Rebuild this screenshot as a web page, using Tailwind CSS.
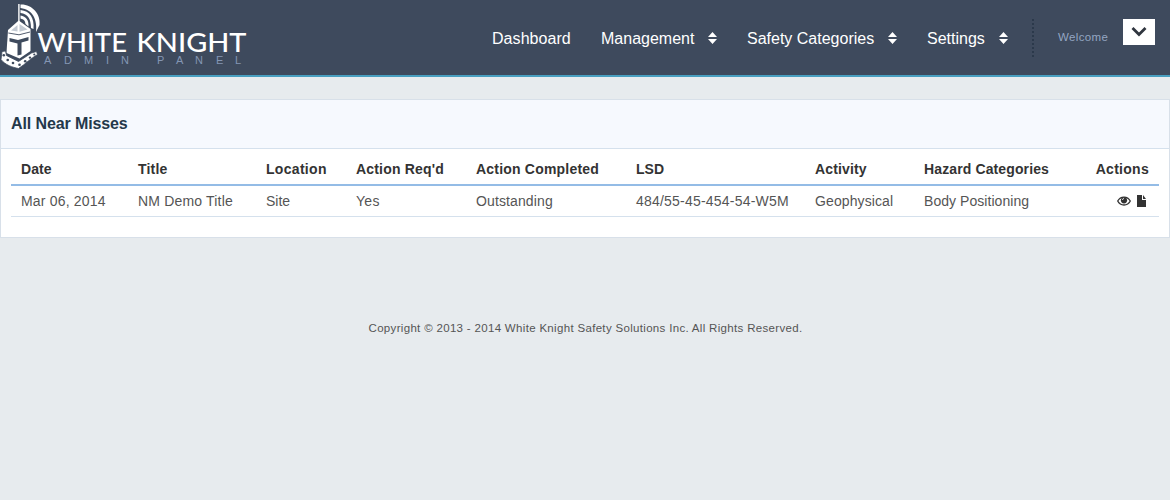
<!DOCTYPE html>
<html lang="en">
<head>
<meta charset="utf-8">
<title>White Knight Admin Panel</title>
<script src="https://cdn.jsdelivr.net/npm/@tailwindcss/browser@4"></script>
</head>
<body class="min-h-screen bg-[#e7ebee] font-['Liberation_Sans',Arial,sans-serif] text-[#555] overflow-hidden">
<header class="flex h-[77px] items-start border-b-2 border-[#489fc0] bg-[#3e4a5d]">
  <svg class="block h-[75px] w-[260px] shrink-0" viewBox="0 0 260 75">
    <path d="M18.900 4V23" stroke="#fff" stroke-width="1.400"/>
    <path d="M20.500 4.500C32 4 41 14 39.500 25L36 32C37.500 20 33 9.500 20.500 8Z" fill="#fff"/>
    <path d="M20.500 10C30 11 34.500 18 33.500 29L31 28C31 19 28 14 20.500 13Z" fill="#fff"/>
    <path d="M20.500 15.500C26 16.500 29 20 28.500 26.500L25.500 24C25 20.500 24 19.500 20.500 18.500Z" fill="#fff"/>
    <path d="M18.700 20.500L30.500 29V51L19.500 58.500L6.500 53L8 30Z" fill="#fff"/>
    <path d="M19.500 24L27.500 29.500L19.500 31.800ZM17.500 25V31.500L11 30.500Z" fill="#c3cad3"/>
    <path d="M8.300 33L19 34.800L30 32" fill="none" stroke="#3e4a5d" stroke-width=".9"/>
    <path d="M9.500 38L18 40L28.500 37V40.500L21.500 42.500V54.500L17.500 55.500V43.500L9.500 41.500Z" fill="#3e4a5d"/>
    <path d="M2 51.500L5.500 51L6.500 55.500L18.500 61.500L31.500 53L36.500 51.500L37.500 54.500C30.500 58.500 25.500 64 18.500 68.500C13 67.500 5 65 1 59.500Z" fill="#fff" stroke="#3e4a5d" stroke-width=".8"/>
    <g fill="#3e4a5d"><circle cx="3.800" cy="55.300" r="1.300"/><circle cx="7.700" cy="60" r="1.300"/><circle cx="13" cy="63" r="1.300"/><circle cx="19.500" cy="64.700" r="1.300"/><circle cx="25.200" cy="61.200" r="1.300"/><circle cx="30" cy="57.600" r="1.200"/><circle cx="34.300" cy="54.500" r="1.100"/></g>
    <g class="fill-white font-['Lato',sans-serif] text-[26.400px] font-medium">
      <text x="37.500" y="52" textLength="89.500" lengthAdjust="spacingAndGlyphs">WHITE</text>
      <text x="136.500" y="52" textLength="110" lengthAdjust="spacingAndGlyphs">KNIGHT</text>
    </g>
    <text x="44 64 84 106 121 139 157 176 195 216 235" y="64" class="fill-[#8496b4] text-[11px]">ADMIN PANEL</text>
  </svg>
  <nav class="ml-auto flex h-[77px] items-center text-base text-white">
    <a class="w-[109px] tracking-[.06px]">Dashboard</a>
    <a class="flex w-[146px] items-center"><span class="w-[107px]">Management</span><svg class="-mt-[2px] h-[12px] w-[9px]" viewBox="0 0 9 12"><path d="M4.500 0L9 5H0ZM0 7H9L4.500 12Z" fill="#fff"/></svg></a>
    <a class="flex w-[180px] items-center"><span class="w-[141px]">Safety Categories</span><svg class="-mt-[2px] h-[12px] w-[9px]" viewBox="0 0 9 12"><path d="M4.500 0L9 5H0ZM0 7H9L4.500 12Z" fill="#fff"/></svg></a>
    <a class="flex w-[105px] items-center"><span class="w-[72px]">Settings</span><svg class="-mt-[2px] h-[12px] w-[9px]" viewBox="0 0 9 12"><path d="M4.500 0L9 5H0ZM0 7H9L4.500 12Z" fill="#fff"/></svg></a>
  </nav>
  <svg class="mt-[19px] h-[38px] w-[2px]" viewBox="0 0 2 38"><path d="M1 0V38" stroke="#2b394b" stroke-width="2" stroke-dasharray="2 2"/></svg>
  <span class="mt-[29px] ml-[24px] w-[65px] text-[11.500px] leading-4 tracking-[.35px] text-[#94a6c2]">Welcome</span>
  <button class="mt-[19px] mr-[15px] flex h-[26px] w-[32px] justify-center bg-white pt-[8px]"><svg class="h-[10px] w-[16px]" viewBox="0 0 16 10"><path d="M1.500 1L8 7.500L14.500 1" fill="none" stroke="#30363f" stroke-width="2.800"/></svg></button>
</header>
<main class="mt-[22px] h-[139px] border border-[#d8e0e9] bg-white">
  <h1 class="flex h-[49px] items-center border-b border-[#d5e1ed] bg-[#f6f9fe] pl-[10px] text-base font-bold tracking-[-.11px] text-[#24384a]">All Near Misses</h1>
  <table class="mx-[10px] w-[1148px] table-fixed border-collapse text-left text-sm">
    <colgroup><col class="w-[117px]"><col class="w-[128px]"><col class="w-[90px]"><col class="w-[120px]"><col class="w-[160px]"><col class="w-[179px]"><col class="w-[109px]"><col class="w-[160px]"><col></colgroup>
    <thead><tr class="h-[36px] border-b-2 border-[#94bce6] whitespace-nowrap text-[#333] [&>th]:pl-[10px] [&>th]:pt-[5px]"><th class="tracking-[.1px]">Date</th><th class="tracking-[.2px]">Title</th><th class="tracking-[.3px]">Location</th><th class="tracking-[.18px]">Action Req'd</th><th class="tracking-[.2px]">Action Completed</th><th>LSD</th><th class="tracking-[.15px]">Activity</th><th class="tracking-[.12px]">Hazard Categories</th><th class="pr-[10px] text-right tracking-[.28px]">Actions</th></tr></thead>
    <tbody><tr class="h-[31px] border-b border-[#d5e1ed] whitespace-nowrap [&>td]:pl-[10px] [&>td]:pt-px"><td class="tracking-[.18px]">Mar 06, 2014</td><td class="tracking-[.18px]">NM Demo Title</td><td>Site</td><td class="tracking-[.3px]">Yes</td><td class="tracking-[.12px]">Outstanding</td><td class="tracking-[.21px]">484/55-45-454-54-W5M</td><td class="tracking-[.1px]">Geophysical</td><td class="tracking-[.05px]">Body Positioning</td>
      <td><div class="flex items-center justify-end gap-[6px] pr-[13px]">
        <svg class="h-[10px] w-[14px]" viewBox="0 0 14 10"><path d="M.7 5C3.500-.3 10.500-.3 13.300 5C10.500 10.300 3.500 10.300 .7 5Z" fill="none" stroke="#333" stroke-width="1.300"/><circle cx="7" cy="4.300" r="3.100" fill="#333"/><path d="M5.400 4Q5.500 2.500 7 2.500" fill="none" stroke="#fff" stroke-width=".8"/></svg>
        <svg class="h-[12px] w-[9px]" viewBox="0 0 9 12"><path d="M0 0H5V5H9V12H0ZM6 0L9 4H6Z" fill="#333"/></svg>
      </div></td></tr></tbody>
  </table>
</main>
<footer class="mt-[82px] pl-px text-center text-[11.500px] leading-4 tracking-[.32px]"><span>Copyright © 2013 - 2014 White Knight Safety Solutions Inc. All Rights Reserved.</span></footer>
</body>
</html>
